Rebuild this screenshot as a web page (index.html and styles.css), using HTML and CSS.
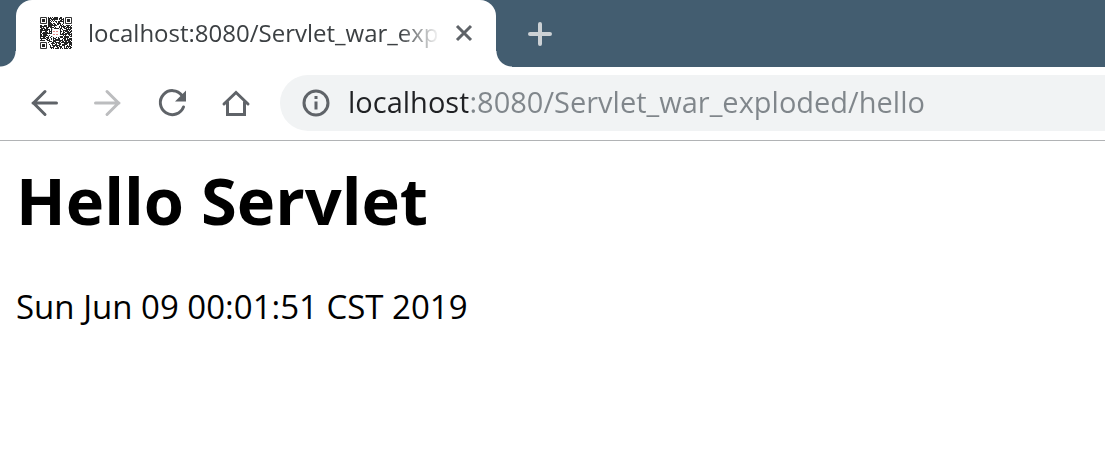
FILE: index.html
```html
<!DOCTYPE html>
<html lang="en">
<head>
<meta charset="utf-8">
<title>localhost:8080/Servlet_war_exploded/hello</title>
<link rel="stylesheet" href="styles.css">
</head>
<body>
<header class="browser">
  <div class="tab-strip">
    <div class="tab">
      <svg class="favicon" viewBox="0 0 32 32" aria-hidden="true">
        <path id="modules" fill="#222"/>
        <g fill="none" stroke="#333"><path d="M.5.5h6v6h-6zM25.5.5h6v6h-6zM.5 25.5h6v6h-6z"/></g>
        <path fill="#222" d="M2 2h3v3H2zM27 2h3v3h-3zM2 27h3v3H2z"/>
        <rect x="12" y="12" width="8" height="8" rx="1" fill="#fff"/>
        <path stroke="#e88a88" stroke-dasharray="2 1" d="M13 14.500h6M13 17.500h6"/>
      </svg>
      <span class="tab-title">localhost:8080/Servlet_war_exp</span>
      <button class="tab-close" aria-label="Close tab"><svg viewBox="0 0 18 18"><path d="M2 2l14 14M16 2L2 16"/></svg></button>
    </div>
    <button class="new-tab" aria-label="New tab"><svg viewBox="0 0 24 24"><path d="M12 2v20M2 12h20"/></svg></button>
  </div>
  <nav class="toolbar">
    <button class="tool" aria-label="Back"><svg viewBox="0 0 32 32"><path d="M28.500 16H5M17 4.500L5.500 16 17 27.500"/></svg></button>
    <button class="tool" aria-label="Forward" disabled><svg viewBox="0 0 32 32"><path d="M3.500 16H27M15 4.500L26.500 16 15 27.500"/></svg></button>
    <button class="tool" aria-label="Reload"><svg viewBox="0 0 32 32"><path d="M26 8.500A12 12 0 1 0 27.500 20"/><path class="solid" d="M30 3.500v11H19z"/></svg></button>
    <button class="tool" aria-label="Home"><svg viewBox="0 0 32 32"><path d="M4 17L16 5.500 28 17M7.500 15v12.500h17V15"/></svg></button>
    <div class="omnibox">
      <svg class="info" viewBox="0 0 28 28" aria-hidden="true"><circle cx="14" cy="14" r="12"/><path d="M14 12.500v8M14 7v3"/></svg>
      <input class="address" type="text" aria-label="Address" value="localhost:8080/Servlet_war_exploded/hello" spellcheck="false">
    </div>
  </nav>
</header>
<main class="page">
  <h1 class="heading">Hello Servlet</h1>
  <p class="date">Sun Jun 09 00:01:51 CST 2019</p>
</main>
<script src="favicon.js"></script>
</body>
</html>
```
FILE: styles.css
```css
* { box-sizing: border-box; }
body {
  margin: 0;
  background: #fff;
  color: #000;
  font-family: "Open Sans", "Noto Sans", sans-serif;
}
button {
  display: flex;
  align-items: center;
  justify-content: center;
  padding: 0;
  border: 0;
  background: none;
}
svg {
  flex: none;
  fill: none;
}
.browser { border-bottom: 1px solid #b1b3b5; }
.tab-strip {
  display: flex;
  align-items: center;
  height: 67px;
  padding-left: 16px;
  background: #435d70;
}
.tab {
  position: relative;
  display: flex;
  align-items: center;
  width: 480px;
  height: 67px;
  padding: 0 22px 2px 24px;
  border-radius: 16px 16px 0 0;
  background: #fff;
}
.tab::before,
.tab::after {
  content: "";
  position: absolute;
  bottom: 0;
  width: 16px;
  height: 16px;
}
.tab::before {
  right: 100%;
  background: radial-gradient(circle at 0 0, transparent 15px, #fff 16px);
}
.tab::after {
  left: 100%;
  background: radial-gradient(circle at 100% 0, transparent 15px, #fff 16px);
}
.favicon {
  width: 32px;
  height: 32px;
  margin-right: 16px;
}
.tab-title {
  flex: 1;
  min-width: 0;
  white-space: nowrap;
  color: #3c4043;
  font-size: 24px;
  line-height: 36px;
  mask-image: linear-gradient(to right, #000 calc(100% - 40px), transparent);
}
.tab-close {
  width: 20px;
  height: 32px;
  margin-left: 14px;
}
.tab-close svg {
  width: 18px;
  height: 18px;
  stroke: #5f6368;
  stroke-width: 3;
}
.new-tab {
  width: 40px;
  height: 40px;
  margin-left: 24px;
}
.new-tab svg {
  width: 24px;
  height: 24px;
  stroke: #ccd1d5;
  stroke-width: 4;
  stroke-linecap: round;
}
.toolbar {
  display: flex;
  align-items: center;
  height: 73px;
  padding: 0 0 2px 12px;
}
.tool {
  width: 64px;
  height: 56px;
  color: #5f6368;
}
.tool:disabled { color: #bcbdbf; }
.tool svg {
  width: 32px;
  height: 32px;
  stroke: currentColor;
  stroke-width: 3;
  stroke-linecap: round;
}
.tool .solid {
  fill: currentColor;
  stroke: none;
}
.omnibox {
  display: flex;
  flex: 1;
  align-items: center;
  gap: 18px;
  height: 56px;
  margin-left: 12px;
  padding-left: 22px;
  border-radius: 28px 0 0 28px;
  background: #f1f3f4;
}
.info {
  width: 28px;
  height: 28px;
  stroke: #5f6368;
  stroke-width: 3;
}
.address {
  flex: 1;
  min-width: 0;
  height: 48px;
  padding: 0 0 2px;
  border: 0;
  outline: 0;
  background: linear-gradient(to right, #202124 120px, #80868b 120px);
  background-clip: text;
  color: transparent;
  font: 29px "Open Sans", "Noto Sans", sans-serif;
}
.page { padding: 12px 16px; }
.heading {
  margin: 0;
  font-size: 65px;
  line-height: 94px;
}
.date {
  margin: 36px 0 0;
  font-size: 33px;
  line-height: 48px;
}
```
FILE: favicon.js
```js
// Fill the favicon's 32x32 grid with code modules, leaving the three finder squares clear.
let seed = 2019;
let d = "";
for (let y = 0; y < 32; y++) {
  for (let x = 0; x < 32; x++) {
    seed = (seed * 1103515245 + 12345) % 2147483648;
    const finder = (x < 8 && (y < 8 || y > 23)) || (x > 23 && y < 8);
    if (!finder && seed / 2147483648 < 0.62) d += `M${x} ${y}h1v1h-1z`;
  }
}
document.getElementById("modules").setAttribute("d", d);
```
